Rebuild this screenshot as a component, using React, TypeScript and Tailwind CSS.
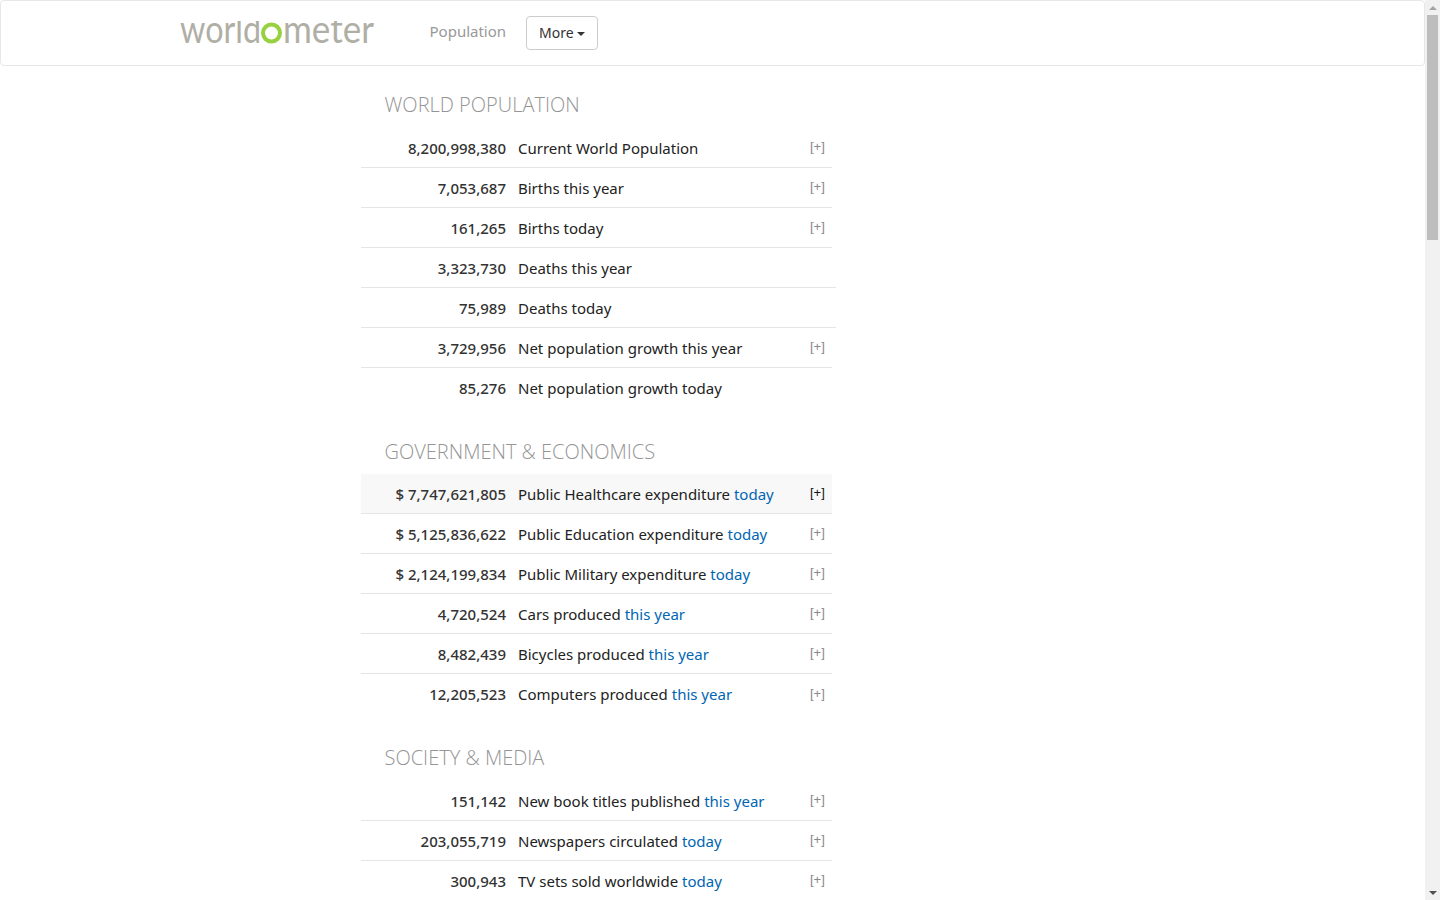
type Row = { value: string; label: string; accent?: string; plus?: boolean; wide?: boolean; hot?: boolean };

const population: Row[] = [
  { value: "8,200,998,380", label: "Current World Population", plus: true },
  { value: "7,053,687", label: "Births this year", plus: true },
  { value: "161,265", label: "Births today", plus: true },
  { value: "3,323,730", label: "Deaths this year", wide: true },
  { value: "75,989", label: "Deaths today", wide: true },
  { value: "3,729,956", label: "Net population growth this year", plus: true },
  { value: "85,276", label: "Net population growth today" },
];

const economics: Row[] = [
  { value: "$ 7,747,621,805", label: "Public Healthcare expenditure", accent: "today", plus: true, hot: true },
  { value: "$ 5,125,836,622", label: "Public Education expenditure", accent: "today", plus: true },
  { value: "$ 2,124,199,834", label: "Public Military expenditure", accent: "today", plus: true },
  { value: "4,720,524", label: "Cars produced", accent: "this year", plus: true },
  { value: "8,482,439", label: "Bicycles produced", accent: "this year", plus: true },
  { value: "12,205,523", label: "Computers produced", accent: "this year", plus: true },
];

const media: Row[] = [
  { value: "151,142", label: "New book titles published", accent: "this year", plus: true },
  { value: "203,055,719", label: "Newspapers circulated", accent: "today", plus: true },
  { value: "300,943", label: "TV sets sold worldwide", accent: "today", plus: true },
];

// the real logo has short ascenders, so the tops are masked off with a white bar
function Logo() {
  return (
    <svg width="216" height="50" viewBox="0 0 216 50" className="font-['Lato',sans-serif] text-[39px]">
      <text x="0" y="39" fill="#b0afa6" textLength="81" lengthAdjust="spacingAndGlyphs">world</text>
      <text x="103" y="39" fill="#b0afa6" textLength="91" lengthAdjust="spacingAndGlyphs">meter</text>
      <rect x="0" y="0" width="216" height="17" fill="#ffffff" />
      <circle cx="91.5" cy="29" r="8.5" fill="none" stroke="#98d13f" strokeWidth="4" />
    </svg>
  );
}

function CounterRow({ row, last }: { row: Row; last: boolean }) {
  return (
    <div
      className={`flex h-10 items-start pt-[9px] leading-[22px] ${row.wide ? "w-[475px]" : "w-[471px]"} ${last ? "" : "border-b border-[#e5e5e5]"} ${row.hot ? "bg-[#f8f8f8]" : ""}`}
    >
      <div className="w-[145px] text-right text-[15px] font-medium text-[#333]">{row.value}</div>
      <div className="ml-3 w-[280px] text-[15px] text-[#222]">
        {row.label} {row.accent && <span className="text-[#0066b3]">{row.accent}</span>}
      </div>
      {row.plus && (
        <span
          className={`ml-3 font-['Liberation_Sans',sans-serif] text-[13px] leading-[20px] ${last ? "mt-px" : ""} ${row.hot ? "text-[#111]" : "text-[#888]"}`}
        >
          [+]
        </span>
      )}
    </div>
  );
}

function Section({ title, rows, tight, open }: { title: string; rows: Row[]; tight?: boolean; open?: boolean }) {
  return (
    <section>
      <h2 className="pl-[23.5px] font-['Open_Sans',sans-serif] text-xl leading-[27px] font-light text-[#959595]">{title}</h2>
      <div className={tight ? "mt-[9px]" : "mt-[10px]"}>
        {rows.map((row, i) => (
          <CounterRow key={row.value} row={row} last={!open && i === rows.length - 1} />
        ))}
      </div>
    </section>
  );
}

function Scrollbar() {
  return (
    <div className="flex h-full w-[15px] flex-col items-center bg-[#f1f1f1]">
      <div className="flex h-[15px] w-full items-center justify-center">
        <span className="border-x-[4px] border-b-[4px] border-x-transparent border-b-[#a3a3a3]" />
      </div>
      <div className="h-[225px] w-[11px] bg-[#bdbdbd]" />
      <div className="flex-1" />
      <div className="flex h-[15px] w-full items-center justify-center">
        <span className="border-x-[4px] border-t-[4px] border-x-transparent border-t-[#505050]" />
      </div>
    </div>
  );
}

export default function App() {
  return (
    <div className="flex h-[900px] w-full overflow-hidden bg-white font-['Noto_Sans',sans-serif]">
      <div className="min-w-0 flex-1">
        <nav className="flex h-[66px] items-center rounded border border-[#e7e7e7] bg-white pl-[179px]">
          <a className="-mt-[9px]">
            <Logo />
          </a>
          <a className="-mt-[3px] ml-[33.5px] text-[15px] text-[#999]">Population</a>
          <button className="ml-5 h-[34px] rounded border border-[#ccc] px-3 pb-px text-sm text-[#333]">
            More <span className="inline-block border-x-4 border-t-4 border-x-transparent border-t-[#333] align-middle" />
          </button>
        </nav>
        <main className="flex flex-col gap-[30px] pt-[25px] pl-[361px]">
          <Section title="WORLD POPULATION" rows={population} />
          <Section title="GOVERNMENT & ECONOMICS" rows={economics} tight />
          <Section title="SOCIETY & MEDIA" rows={media} open />
        </main>
      </div>
      <Scrollbar />
    </div>
  );
}
